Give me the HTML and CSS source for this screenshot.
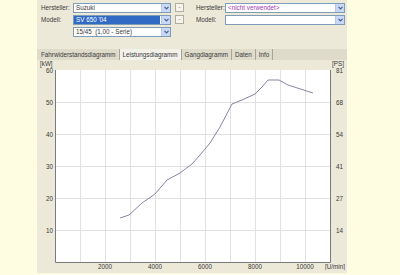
FILE: index.html
```html
<!DOCTYPE html>
<html lang="de">
<head>
  <meta charset="UTF-8">
  <title>Leistungsdiagramm</title>
  <link rel="stylesheet" href="styles.css">
</head>
<body>

<div class="panel">
  <!-- Auswahl Hersteller / Modell -->
  <div class="selectors">
    <span class="lbl">Hersteller:</span>
    <div class="combo"><span class="val">Suzuki</span><span class="arrow"><svg width="5" height="4" viewBox="0 0 5 4"><path d="M0.5 0.8 L2.5 2.8 L4.5 0.8" fill="none" stroke="#4d6185" stroke-width="1.2"/></svg></span></div>
    <span class="mini">-</span>
    <span class="lbl">Hersteller:</span>
    <div class="combo"><span class="val unused">&lt;nicht verwendet&gt;</span><span class="arrow"><svg width="5" height="4" viewBox="0 0 5 4"><path d="M0.5 0.8 L2.5 2.8 L4.5 0.8" fill="none" stroke="#4d6185" stroke-width="1.2"/></svg></span></div>

    <span class="lbl">Modell:</span>
    <div class="combo"><span class="val sel">SV 650 '04</span><span class="arrow"><svg width="5" height="4" viewBox="0 0 5 4"><path d="M0.5 0.8 L2.5 2.8 L4.5 0.8" fill="none" stroke="#4d6185" stroke-width="1.2"/></svg></span></div>
    <span class="mini">-</span>
    <span class="lbl">Modell:</span>
    <div class="combo"><span class="val"></span><span class="arrow"><svg width="5" height="4" viewBox="0 0 5 4"><path d="M0.5 0.8 L2.5 2.8 L4.5 0.8" fill="none" stroke="#4d6185" stroke-width="1.2"/></svg></span></div>

    <span class="lbl"></span>
    <div class="combo"><span class="val">15/45&nbsp; (1,00 - Serie)</span><span class="arrow"><svg width="5" height="4" viewBox="0 0 5 4"><path d="M0.5 0.8 L2.5 2.8 L4.5 0.8" fill="none" stroke="#4d6185" stroke-width="1.2"/></svg></span></div>
  </div>

  <!-- Reiter -->
  <div class="tabs">
    <span class="tab">Fahrwiderstandsdiagramm</span>
    <span class="tab active">Leistungsdiagramm</span>
    <span class="tab">Gangdiagramm</span>
    <span class="tab">Daten</span>
    <span class="tab">Info</span>
  </div>

  <!-- Diagramm -->
  <svg class="chart" width="310" height="210" viewBox="37 63 310 210">
    <rect x="55" y="73" width="275" height="193" fill="#ffffff"/>
    <g stroke="#e2e2e2" stroke-width="1">
      <path d="M80.5 73V265 M105.5 73V265 M130.5 73V265 M155.5 73V265 M180.5 73V265 M205.5 73V265 M230.5 73V265 M255.5 73V265 M280.5 73V265 M305.5 73V265"/>
      <path d="M56 105.5H330 M56 137.5H330 M56 169.5H330 M56 201.5H330 M56 233.5H330"/>
    </g>
    <path d="M55.5 73V265.5H330.5V73" fill="none" stroke="#7a7a7a" stroke-width="1"/>
    <polyline fill="none" stroke="#8585aa" stroke-width="1"
      points="120,221 129,218 142,206 155,197 167,183 180,176 192,167 200,158 210,146 220,130 232,107 242,103 255,97 262,90 268,83 279,83 288,88 313,96"/>
    <g class="ax">
      <text x="40" y="69">[kW]</text>
      <text x="53" y="75.5" text-anchor="end">60</text>
      <text x="53" y="107.5" text-anchor="end">50</text>
      <text x="53" y="139.5" text-anchor="end">40</text>
      <text x="53" y="171.5" text-anchor="end">30</text>
      <text x="53" y="203.5" text-anchor="end">20</text>
      <text x="53" y="235.5" text-anchor="end">10</text>
      <text x="344" y="69" text-anchor="end">[PS]</text>
      <text x="343" y="75.5" text-anchor="end">81</text>
      <text x="343" y="107.5" text-anchor="end">68</text>
      <text x="343" y="139.5" text-anchor="end">54</text>
      <text x="343" y="171.5" text-anchor="end">41</text>
      <text x="343" y="203.5" text-anchor="end">27</text>
      <text x="343" y="235.5" text-anchor="end">14</text>
      <text x="105" y="271.5" text-anchor="middle">2000</text>
      <text x="155" y="271.5" text-anchor="middle">4000</text>
      <text x="205" y="271.5" text-anchor="middle">6000</text>
      <text x="255" y="271.5" text-anchor="middle">8000</text>
      <text x="305" y="271.5" text-anchor="middle">10000</text>
      <text x="345" y="271.5" text-anchor="end">[U/min]</text>
    </g>
  </svg>
</div>

</body>
</html>
```

FILE: styles.css
```css
body {
  margin: 0;
  background: #fffde1;
  font-family: 'Liberation Sans', Arial, sans-serif;
  font-size: 6.3px;
  color: #3a3a3a;
}

.panel {
  width: 310px;
  height: 273px;
  margin-left: 37px;
  background: #ece9d8;
  display: flex;
  flex-direction: column;
}

.selectors {
  display: grid;
  grid-template-columns: 32px 98px 19px 35px 120px;
  grid-auto-rows: 10px;
  row-gap: 2px;
  padding: 3px 0 0 4px;
  height: 49px;
  box-sizing: border-box;
}

.selectors .mini {
  margin-left: 4px;
}

.selectors .combo + .mini + .lbl {
  margin-left: 6px;
}

.lbl {
  line-height: 10px;
  white-space: nowrap;
}

.combo {
  display: flex;
  background: #fff;
  border: 1px solid #7f9db9;
  box-sizing: border-box;
  height: 10px;
}

.val {
  flex: 1;
  line-height: 8px;
  padding-left: 2px;
  white-space: nowrap;
  overflow: hidden;
}

.val.sel {
  background: #316ac5;
  color: #fff;
  margin-right: 1px;
}

.val.unused {
  color: #a040b0;
}

.arrow {
  width: 8px;
  background: #c8d8f8;
  border-left: 1px solid #b6c8ec;
  display: flex;
  align-items: center;
  justify-content: center;
}

.mini {
  width: 9px;
  height: 9px;
  box-sizing: border-box;
  border: 1px solid #b0ad9c;
  background: #f4f3ee;
  font-size: 6px;
  line-height: 6px;
  text-align: center;
  color: #555;
}

.tabs {
  display: flex;
  height: 11px;
  background: #dedbcb;
  padding-left: 1px;
}

.tab {
  line-height: 11px;
  padding: 0 3px;
  border-right: 1px solid #a8a595;
  white-space: nowrap;
}

.tab.active {
  background: #f2f1ea;
  border-left: 1px solid #a8a595;
  margin-left: -1px;
}

.chart {
  display: block;
}

.ax text {
  font-family: 'Liberation Sans', Arial, sans-serif;
  font-size: 6.3px;
  fill: #3a3a3a;
}
```
